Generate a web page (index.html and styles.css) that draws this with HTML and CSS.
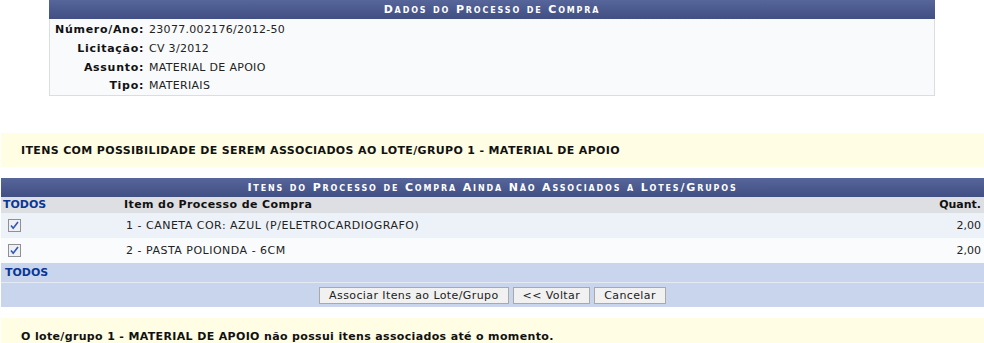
FILE: index.html
```html
<!DOCTYPE html>
<html lang="pt-BR">
<head>
  <meta charset="UTF-8" />
  <title>Associar Itens ao Lote/Grupo</title>
  <link rel="stylesheet" href="styles.css">
</head>
<body>
  <table class="visualizacao">
    <caption>Dados do Processo de Compra</caption>
    <tbody>
      <tr><th>Número/Ano:</th><td>23077.002176/2012-50</td></tr>
      <tr><th>Licitação:</th><td>CV 3/2012</td></tr>
      <tr><th>Assunto:</th><td>MATERIAL DE APOIO</td></tr>
      <tr><th>Tipo:</th><td>MATERIAIS</td></tr>
    </tbody>
  </table>

  <div class="descricao">ITENS COM POSSIBILIDADE DE SEREM ASSOCIADOS AO LOTE/GRUPO 1 - MATERIAL DE APOIO</div>

  <table class="listagem">
    <caption>Itens do Processo de Compra Ainda Não Associados a Lotes/Grupos</caption>
    <colgroup>
      <col class="col-check">
      <col>
      <col class="col-quant">
    </colgroup>
    <thead>
      <tr>
        <th class="todos-topo"><a href="#">TODOS</a></th>
        <th>Item do Processo de Compra</th>
        <th class="num">Quant.</th>
      </tr>
    </thead>
    <tbody>
      <tr class="linhaPar">
        <td class="marcar"><span class="check"><svg width="13" height="13" viewBox="0 0 13 13"><rect x="0.5" y="0.5" width="12" height="12" fill="#eef0f4" stroke="#8f8f94"/><path d="M3 6.5 L5.2 9.2 L10 3" fill="none" stroke="#3056b8" stroke-width="1.6"/></svg></span></td>
        <td class="item">1 - CANETA COR: AZUL (P/ELETROCARDIOGRAFO)</td>
        <td class="num">2,00</td>
      </tr>
      <tr class="linhaImpar">
        <td class="marcar"><span class="check"><svg width="13" height="13" viewBox="0 0 13 13"><rect x="0.5" y="0.5" width="12" height="12" fill="#eef0f4" stroke="#8f8f94"/><path d="M3 6.5 L5.2 9.2 L10 3" fill="none" stroke="#3056b8" stroke-width="1.6"/></svg></span></td>
        <td class="item">2 - PASTA POLIONDA - 6CM</td>
        <td class="num">2,00</td>
      </tr>
      <tr class="todos">
        <td colspan="3"><a href="#">TODOS</a></td>
      </tr>
    </tbody>
    <tfoot>
      <tr>
        <td colspan="3">
          <div class="botoes">
            <button type="button">Associar Itens ao Lote/Grupo</button>
            <button type="button">&lt;&lt; Voltar</button>
            <button type="button">Cancelar</button>
          </div>
        </td>
      </tr>
    </tfoot>
  </table>

  <div class="descricao aviso">O lote/grupo 1 - MATERIAL DE APOIO não possui itens associados até o momento.</div>
</body>
</html>
```

FILE: styles.css
```css
body {
  margin: 0;
  font-family: "DejaVu Sans", Verdana, sans-serif;
  font-size: 11px;
  color: #222;
  background: #fff;
}

table {
  border-collapse: collapse;
}

caption {
  height: 19px;
  line-height: 19px;
  background: linear-gradient(#56659a, #414f83);
  color: #fff;
  font-weight: bold;
  font-size: 11px;
  font-variant: small-caps;
  letter-spacing: 1.85px;
  text-align: center;
}

a {
  color: #0a3796;
  font-weight: bold;
  text-decoration: none;
}

/* dados do processo */
.visualizacao {
  width: 886px;
  margin: 0 auto;
  background: #f9fafc;
  border: 1px solid #dcdde2;
  border-top: none;
}

.visualizacao th,
.visualizacao td {
  padding: 0;
  line-height: 19px;
}

.visualizacao th {
  width: 94px;
  text-align: right;
  font-weight: bold;
  color: #111;
  letter-spacing: 0.7px;
  white-space: nowrap;
}

.visualizacao td {
  padding-left: 5px;
  letter-spacing: 0.3px;
}

.visualizacao tr:first-child th,
.visualizacao tr:first-child td {
  padding-top: 1px;
}

.visualizacao tr:last-child th,
.visualizacao tr:last-child td {
  line-height: 18px;
}

/* faixas amarelas */
.descricao {
  margin: 37px 0 0 1px;
  height: 34px;
  line-height: 36px;
  padding-left: 20px;
  background: #fffde4;
  font-weight: bold;
  color: #111;
  letter-spacing: 0.35px;
}

.descricao.aviso {
  margin-top: 11px;
  padding-top: 1px;
}

/* listagem de itens */
.listagem {
  width: 983px;
  margin: 11px 0 0 1px;
  table-layout: fixed;
}

.col-check {
  width: 123px;
}

.col-quant {
  width: 120px;
}

.listagem thead tr {
  background: #dedfe3;
}

.listagem thead th {
  padding: 0;
  line-height: 16px;
  text-align: left;
  font-weight: bold;
  color: #111;
  letter-spacing: 0.4px;
}

.listagem thead th.todos-topo {
  padding-left: 2px;
  letter-spacing: 0;
}

.listagem .num {
  text-align: right;
  padding-right: 3px;
  letter-spacing: 0;
}

.listagem tbody td {
  padding: 0;
  line-height: 25px;
}

.listagem td.marcar {
  padding-left: 7px;
}

.listagem td.item {
  padding-left: 2px;
  letter-spacing: 0.5px;
}

.check {
  display: flex;
}

.linhaPar {
  background: #edf1f8;
}

.linhaImpar {
  background: #f9fbfd;
}

.listagem tr.todos td {
  line-height: 19px;
  padding-left: 4px;
  background: #c8d5ec;
  border-bottom: 1px solid #e4e9f3;
}

.listagem tfoot td {
  padding: 4px 0 3px;
  background: #c8d5ec;
}

.botoes {
  display: flex;
  justify-content: center;
  gap: 4px;
}

.botoes button {
  height: 17px;
  padding: 0 9px;
  font-family: "DejaVu Sans", Verdana, sans-serif;
  font-size: 11px;
  letter-spacing: 0.4px;
  color: #222;
  background: #f1f1f1;
  border: 1px solid #a9a9a9;
  border-radius: 0;
}
```
